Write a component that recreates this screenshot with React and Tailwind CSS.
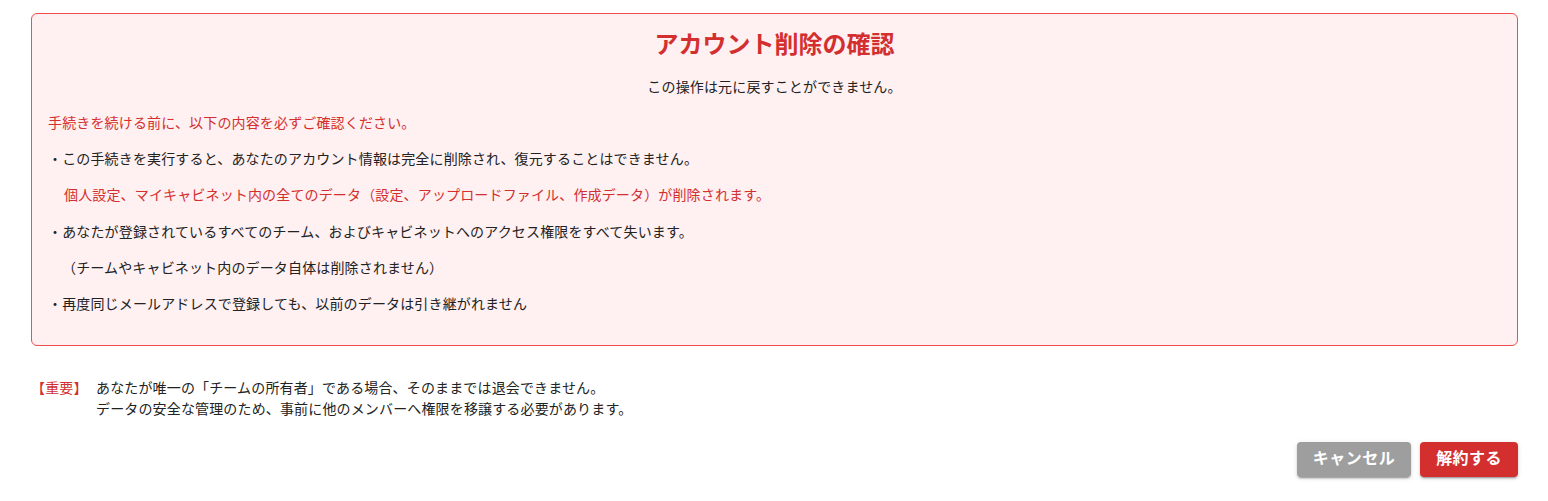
import React from 'react';

const font = { fontFamily: 'Roboto, "Noto Sans CJK JP", sans-serif' };

const btnShadow =
  'shadow-[0_3px_1px_-2px_rgba(0,0,0,0.2),0_2px_2px_0_rgba(0,0,0,0.14),0_1px_5px_0_rgba(0,0,0,0.12)]';

export default function App() {
  return (
    <div className="w-full min-h-screen bg-white pl-[31px] pr-[30px] pt-[13px] text-[#222]" style={font}>
      {/* 削除確認パネル */}
      <div className="rounded-md border border-[#f04e4e] bg-[#fff0f1] px-4 pt-[15px] pb-[30px]">
        <h2 className="text-center text-2xl leading-8 font-bold text-[#d32f2f]">アカウント削除の確認</h2>
        <p className="mt-[16px] text-center text-sm leading-[21px] tracking-[0.01071em]">この操作は元に戻すことができません。</p>

        <div className="mt-[15px] flex flex-col gap-[15.2px] text-sm leading-[21px] tracking-[0.01071em]">
          <p className="text-[#d32f2f]">手続きを続ける前に、以下の内容を必ずご確認ください。</p>
          <p>・この手続きを実行すると、あなたのアカウント情報は完全に削除され、復元することはできません。</p>
          <p className="pl-4 text-[#d32f2f]">個人設定、マイキャビネット内の全てのデータ（設定、アップロードファイル、作成データ）が削除されます。</p>
          <p>・あなたが登録されているすべてのチーム、およびキャビネットへのアクセス権限をすべて失います。</p>
          <p className="pl-[14px]">（チームやキャビネット内のデータ自体は削除されません）</p>
          <p>・再度同じメールアドレスで登録しても、以前のデータは引き継がれません</p>
        </div>
      </div>

      {/* 所有者向けの注意 */}
      <div className="mt-[32px] flex text-sm leading-[21px] tracking-[0.01071em]">
        <span className="w-[65px] shrink-0 text-[#d32f2f]">【重要】</span>
        <div>
          <p>あなたが唯一の「チームの所有者」である場合、そのままでは退会できません。</p>
          <p>データの安全な管理のため、事前に他のメンバーへ権限を移譲する必要があります。</p>
        </div>
      </div>

      <div className="mt-[22px] flex justify-end gap-[9px]">
        <button className={`h-[35px] rounded px-4 text-base font-bold tracking-[0.02857em] text-white bg-[#9e9e9e] ${btnShadow}`}>
          キャンセル
        </button>
        <button className={`h-[35px] rounded px-4 text-base font-bold tracking-[0.02857em] text-white bg-[#d32f2f] ${btnShadow}`}>
          解約する
        </button>
      </div>
    </div>
  );
}
